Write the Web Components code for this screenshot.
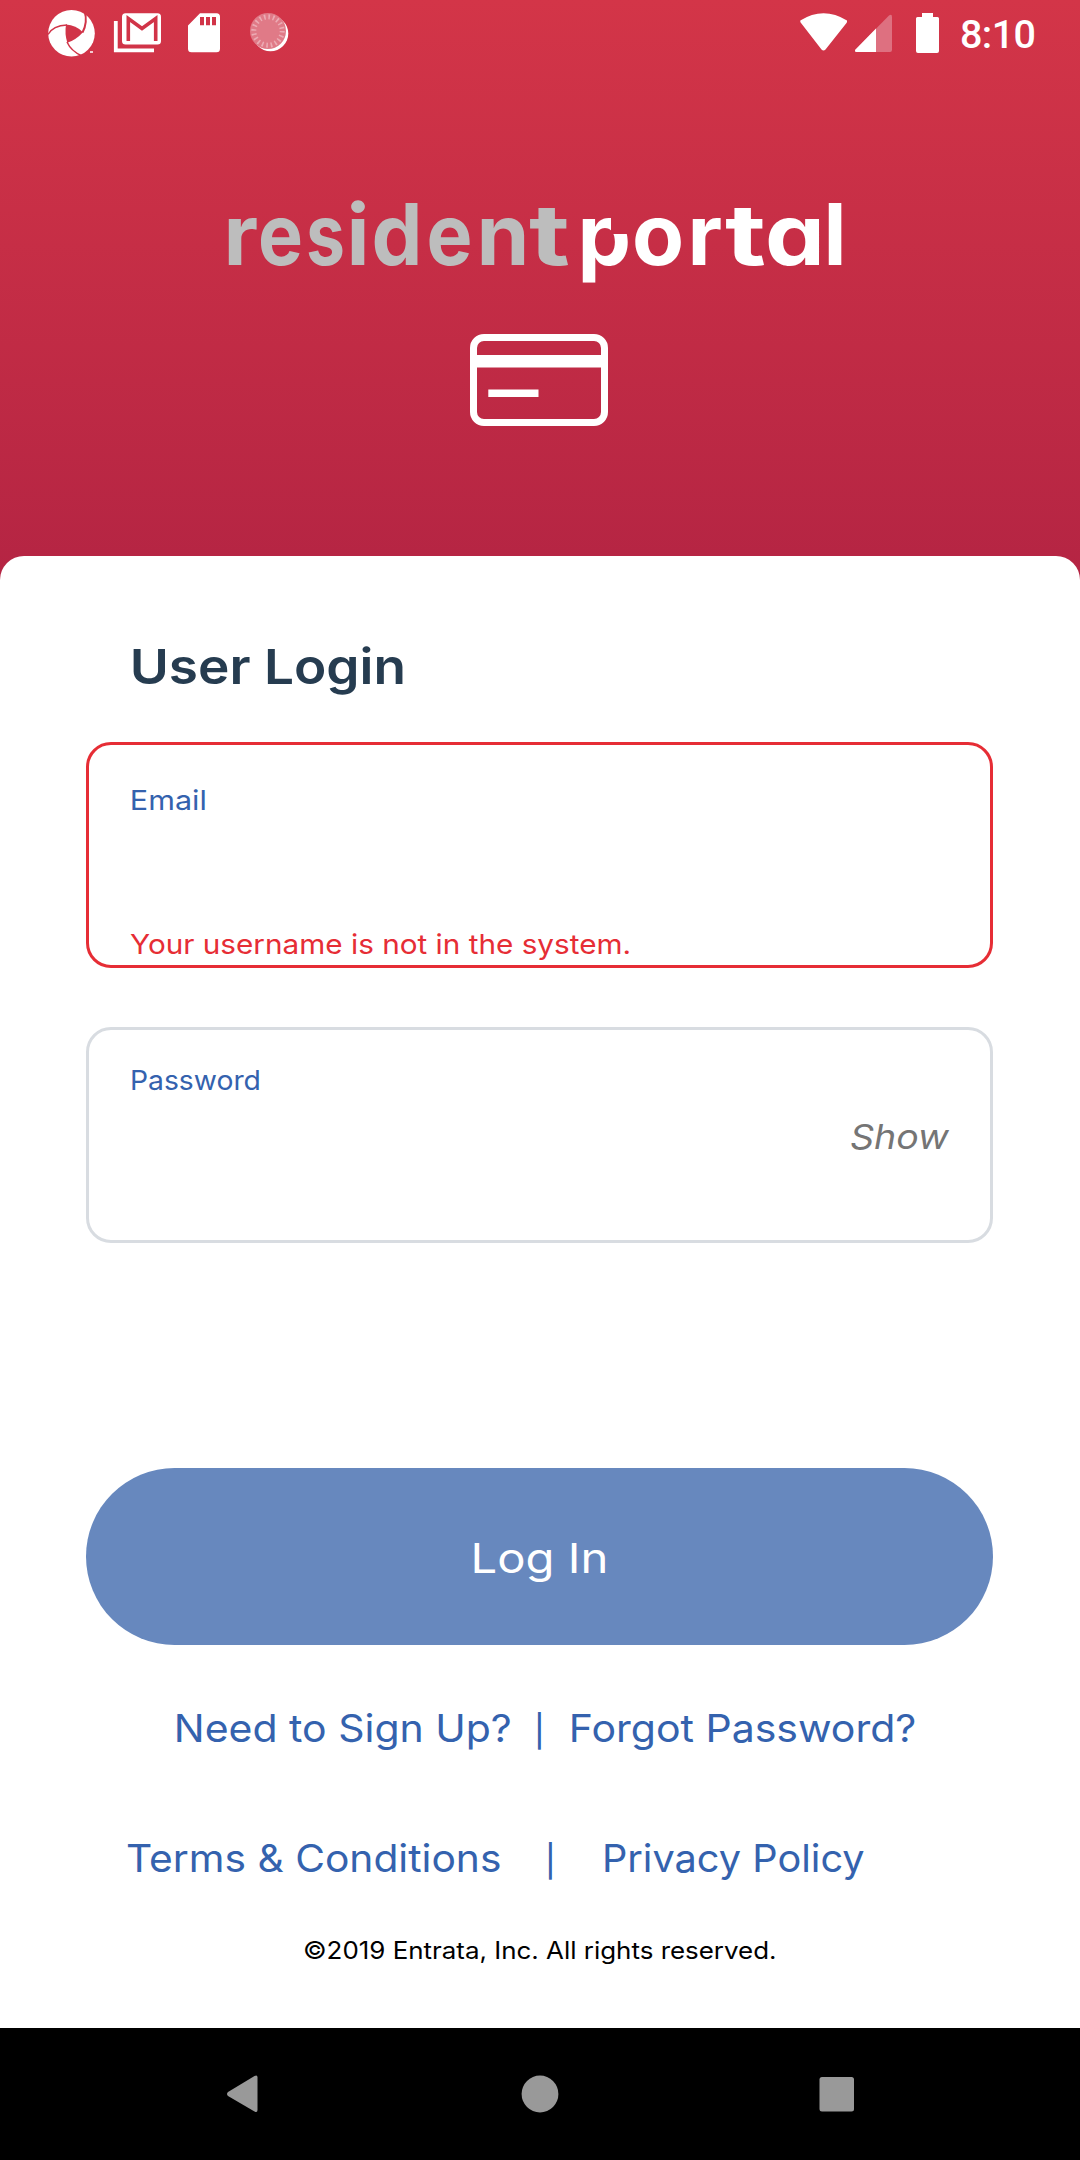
<!DOCTYPE html>
<html lang="en">
<head>
<meta charset="utf-8">
<title>Resident Portal</title>
<style>
html,body{margin:0;padding:0;background:#fff}
body{font-family:Inter,"Liberation Sans",sans-serif}
</style>
</head>
<body>
<portal-app></portal-app>
<script>
const define = (name, html, after) => customElements.define(name, class extends HTMLElement {
  connectedCallback() {
    if (this.shadowRoot) return;
    const root = this.attachShadow({ mode: 'open' });
    const t = document.createElement('template');
    t.innerHTML = html;
    root.append(t.content.cloneNode(true));
    if (after) after(this, root);
  }
});

// One line of text whose box runs from cap height to baseline and whose glyphs span `w` pixels.
const ctx = document.createElement('canvas').getContext('2d');
define('fit-text', `<style>
  :host{display:block;flex:none;line-height:.727;white-space:pre}
  span{display:inline-block;transform-origin:0 0;white-space:pre}
</style><span><slot></slot></span>`, (el, root) => {
  const size = +el.getAttribute('size'), w = +el.getAttribute('w');
  const weight = el.getAttribute('weight') || 400;
  const style = el.hasAttribute('italic') ? 'italic' : 'normal';
  ctx.font = `${style} ${weight} ${size}px Inter`;
  const m = ctx.measureText(el.textContent);
  const k = w / (m.actualBoundingBoxLeft + m.actualBoundingBoxRight);
  Object.assign(el.style, { width: w + 'px', height: size * .727 + 'px', fontSize: size + 'px', fontWeight: weight, fontStyle: style });
  root.querySelector('span').style.transform = `scaleX(${k}) translateX(${m.actualBoundingBoxLeft}px)`;
});

define('status-bar', `<style>
  :host{display:flex;justify-content:space-between;height:66px;color:#fff}
  svg{display:block;flex:none}
  .right{display:flex}
  .time{font:500 39.500px/68px Roboto,sans-serif;width:120px;box-sizing:border-box;letter-spacing:-.6px;padding-top:1px}
</style>
<svg width="320" height="66" viewBox="0 0 320 66">
  <circle cx="71.5" cy="33.3" r="23.3" fill="#fff"/>
  <g fill="none" stroke="#d13448" stroke-width="1.500">
    <path d="M48 34.500Q53 25.500 67 25"/>
    <path d="M84.500 11Q88 22 82.500 32.500" stroke-width="2"/>
    <path d="M67 42Q71 51 82 56"/>
  </g>
  <path d="M66 24.500Q76 25 83 32.300Q76 40 67.300 42.800Q64.500 34 66 24.500Z" fill="#d13448"/>
  <path d="M90 52h3" stroke="#fff" stroke-width="1.500"/>
  <path d="M115.800 21V50.300H154" fill="none" stroke="#fff" stroke-width="3.800"/>
  <rect x="122" y="13.300" width="39" height="31.200" rx="3.500" fill="#fff"/>
  <path d="M128.300 41V18.500L142 28.500L155.700 18.500V41" fill="none" stroke="#d13448" stroke-width="3.600"/>
  <path d="M200 13.300h16.500a3.500 3.500 0 0 1 3.500 3.500v32a3.500 3.500 0 0 1-3.500 3.500h-25a3.500 3.500 0 0 1-3.500-3.500V25.500Z" fill="#fff"/>
  <path d="M202 17v8.300M208 17v8.300M214 17v8.300" stroke="#d13448" stroke-width="4"/>
  <circle cx="270.500" cy="33.500" r="17.800" fill="#fff"/>
  <circle cx="268" cy="31" r="18" fill="#e07a87"/>
  <circle cx="268" cy="31" r="14.200" fill="none" stroke="#ecabb4" stroke-width="5" stroke-dasharray="1.600 2.860"/>
</svg>
<div class="right">
<svg width="161" height="66" viewBox="799 0 161 66">
  <path d="M800.300 20.500Q823.500 6 847 20.500Q847.300 22 846.500 23L825.500 49.500Q823.500 51.500 821.500 49.500L801 23Q800 22 800.300 20.500Z" fill="#fff"/>
  <path d="M855.500 49.500L889 15.500Q892 13.500 892 17V50a2 2 0 0 1-2 2H856.500Q854 51.500 855.500 49.500Z" fill="#de7080"/>
  <path d="M876 28.600V52H856.500Q854 51.500 855.500 49.500Z" fill="#fff"/>
  <path d="M922 13h11v4h4.500a1.500 1.500 0 0 1 1.500 1.500V51a2 2 0 0 1-2 2H918a2 2 0 0 1-2-2V18.500a1.500 1.500 0 0 1 1.500-1.500H922Z" fill="#fff"/>
</svg><div class="time">8:10</div></div>`);

define('portal-logo', `<style>
  :host{display:block}svg{display:block}
  text{font:700 85px Inter,sans-serif;font-feature-settings:"cv11" 1;font-kerning:none}
</style>
<svg width="1080" height="160" viewBox="0 160 1080 160">
  <clipPath id="bowl"><path clip-rule="evenodd" d="M560 160H880V320H560ZM611 205V234H632V205Z"/></clipPath>
  <text y="265" fill="#bdbdbd" x="223.500">r<tspan x="258" textLength="45" lengthAdjust="spacingAndGlyphs">e</tspan><tspan x="306" textLength="39" lengthAdjust="spacingAndGlyphs">s</tspan><tspan x="346.500">i</tspan><tspan x="371.500" textLength="51" lengthAdjust="spacingAndGlyphs">d</tspan><tspan x="426.500" textLength="46" lengthAdjust="spacingAndGlyphs">e</tspan><tspan x="476.500">n</tspan><tspan x="529" textLength="41" lengthAdjust="spacingAndGlyphs">t</tspan></text>
  <text y="265" fill="#fff" clip-path="url(#bowl)" x="577.500 632 687.500">por<tspan x="725" textLength="41" lengthAdjust="spacingAndGlyphs">t</tspan><tspan x="765" textLength="60" lengthAdjust="spacingAndGlyphs">a</tspan><tspan x="823.500">l</tspan></text>
</svg>`);

define('card-icon', `<style>:host{display:block}svg{display:block}</style>
<svg width="138" height="92" viewBox="0 0 138 92">
  <rect x="3.500" y="3.500" width="131" height="85" rx="10.500" fill="none" stroke="#fff" stroke-width="7"/>
  <path d="M4 27.200H134" stroke="#fff" stroke-width="12.500"/>
  <path d="M18.300 59.200H68.500" stroke="#fff" stroke-width="7.500"/>
</svg>`);

define('input-box', `<style>
  :host{display:flex;box-sizing:border-box;flex-direction:column;width:907px;border:3px solid #d8dce1;border-radius:25px;color:#3462ae}
  :host([invalid]){border-color:#e62d35}
</style><slot></slot>`);

define('pill-button', `<style>
  :host{display:flex;box-sizing:border-box;justify-content:center;width:907px;height:177px;padding-top:75px;border-radius:88.500px;background:#6788be;color:#fff}
</style><slot></slot>`);

define('link-row', `<style>
  :host{display:flex;align-items:flex-start;height:28px;color:#3462ae}
</style><slot></slot>`);

define('nav-bar', `<style>
  :host{display:flex;height:132px;background:#000;justify-content:center;gap:237px;align-items:center}
  svg{display:block}
</style>
<svg width="60" height="60" viewBox="0 0 60 60"><path d="M14.500 28.500Q12.500 30.500 14.500 32.500L41 48Q44 49.500 44 46.500V14Q44 11 41 12.500Z" transform="translate(.5 -.500)" fill="#999"/></svg>
<svg width="60" height="60" viewBox="0 0 60 60"><circle cx="30" cy="30" r="18.400" fill="#999"/></svg>
<svg width="60" height="60" viewBox="0 0 60 60"><rect x="12.500" y="13" width="34.500" height="34.500" rx="2.500" fill="#999"/></svg>`);

define('portal-app', `<style>
  :host{display:flex;flex-direction:column;width:1080px;height:2160px;overflow:hidden;background:#fff linear-gradient(#d33548,#b42443) 0 0/100% 590px no-repeat}
  header{height:556px;display:flex;flex-direction:column}
  portal-logo{margin-top:94px}
  card-icon{margin:14px 0 0 470px}
  main{flex:1;box-sizing:border-box;background:#fff;border-radius:24px 24px 0 0;padding:93px 0 0 86px;display:flex;flex-direction:column}
  .title{margin:0 0 58px 47px;color:#263c50}
  .email{height:226px;padding:45px 0 0 41px}
  .email .err{margin:124px 0 0 0;color:#e62d35}
  .pass{height:216px;margin-top:59px;padding:40px 41px 0 42.500px}
  .show{align-self:flex-end;margin-top:34px;color:#757575}
  pill-button{margin-top:225px}
  .a{margin:69px 0 0 91px}.b{margin:102px 0 0 41px}
  .copy{margin:70px 0 0 217.500px;color:#000}
  .bar{margin:6px 30px 0 28px}.b .bar{margin:6px 52px 0 49px}
</style>
<header><status-bar></status-bar><portal-logo></portal-logo><card-icon></card-icon></header>
<main>
  <fit-text class="title" size="48.600" w="270" weight="600">User Login</fit-text>
  <input-box class="email" invalid>
    <fit-text style="margin-left:2px" size="27.500" w="73">Email</fit-text>
    <fit-text class="err" size="27.500" w="499">Your username is not in the system.</fit-text>
  </input-box>
  <input-box class="pass">
    <fit-text size="27.500" w="127">Password</fit-text>
    <fit-text class="show" italic size="34.600" w="98.500">Show</fit-text>
  </input-box>
  <pill-button><fit-text size="41.500" w="131.500">Log In</fit-text></pill-button>
  <link-row class="a"><fit-text size="38.500" w="333">Need to Sign Up?</fit-text><fit-text class="bar" size="31.500" w="3.500">|</fit-text><fit-text size="38.500" w="342.500">Forgot Password?</fit-text></link-row>
  <link-row class="b"><fit-text size="38.500" w="373">Terms &amp; Conditions</fit-text><fit-text class="bar" size="31.500" w="3.500">|</fit-text><fit-text size="38.500" w="259">Privacy Policy</fit-text></link-row>
  <fit-text class="copy" size="23.800" w="470.500">©2019 Entrata, Inc. All rights reserved.</fit-text>
</main>
<nav-bar></nav-bar>`);
</script>
</body>
</html>
